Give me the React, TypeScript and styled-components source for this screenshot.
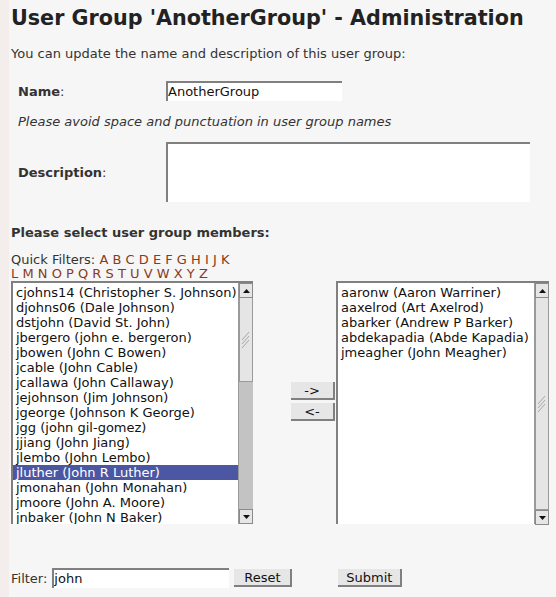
import React from "react";
import styled, { createGlobalStyle } from "styled-components";

const Global = createGlobalStyle`
  html, body { margin: 0; padding: 0; background: #f6f6f6; }
  body { font-family: "DejaVu Sans", Verdana, sans-serif; font-size: 13px; color: #333; }
`;

const Page = styled.div`
  display: flex;
  min-height: 597px;
`;

const Strip = styled.div`
  width: 9px;
  flex: none;
  background: #f3eeeb;
`;

const Main = styled.div`
  flex: 1;
  padding: 6px 0 0 2px;
`;

const Title = styled.h1`
  margin: 0;
  font-size: 20.7px;
  font-weight: bold;
  color: #222;
  line-height: 24px;
`;

const Intro = styled.p`
  margin: 16px 0 0;
  line-height: 15px;
`;

const FieldRow = styled.div<{ $top: number }>`
  display: flex;
  align-items: center;
  margin-top: ${(p) => p.$top}px;
  padding-left: 7px;
`;

const Label = styled.div`
  width: 148px;
  font-weight: bold;
  span { font-weight: normal; }
`;

const TextInput = styled.div<{ $w: number }>`
  width: ${(p) => p.$w}px;
  height: 20px;
  box-sizing: border-box;
  background: #fff;
  border-top: 2px solid #808080;
  border-left: 2px solid #808080;
  line-height: 18px;
  color: #111;
  flex: none;
`;

const TextArea = styled.div`
  width: 364px;
  height: 60px;
  box-sizing: border-box;
  background: #fff;
  border-top: 2px solid #808080;
  border-left: 2px solid #808080;
`;

const Hint = styled.p`
  margin: 13px 0 0 7px;
  font-style: italic;
  line-height: 15px;
`;

const Section = styled.h3`
  margin: 23px 0 0;
  font-size: 13px;
  font-weight: bold;
  line-height: 15px;
`;

const Picker = styled.div`
  display: flex;
  align-items: flex-end;
  margin-top: 13px;
`;

const LeftCol = styled.div`
  width: 242px;
  display: flex;
  flex-direction: column;
`;

const Quick = styled.div`
  width: 220px;
  line-height: 14px;
  margin-bottom: 0;
  a { color: #8b3a1a; text-decoration: none; }
`;

const ListBox = styled.div<{ $w: number }>`
  width: ${(p) => p.$w}px;
  height: 243px;
  box-sizing: border-box;
  background: #fff;
  border-top: 2px solid #808080;
  border-left: 2px solid #808080;
  display: flex;
  flex: none;
`;

const Options = styled.div`
  flex: 1;
  padding-top: 2px;
  overflow: hidden;
`;

const Option = styled.div<{ $sel?: boolean }>`
  height: 15px;
  line-height: 15px;
  padding-left: 3px;
  white-space: nowrap;
  color: ${(p) => (p.$sel ? "#fff" : "#111")};
  background: ${(p) => (p.$sel ? "#4b57a3" : "transparent")};
`;

const ScrollBar = styled.div`
  width: 15px;
  flex: none;
  display: flex;
  flex-direction: column;
  background: #c3c3c3;
  border-left: 1px solid #9a9a9a;
  box-sizing: border-box;
`;

const Arrow = styled.div`
  height: 15px;
  box-sizing: border-box;
  background: #e6e6e6;
  border: 1px solid #8a8a8a;
  display: flex;
  align-items: center;
  justify-content: center;
  flex: none;
`;

const Thumb = styled.div<{ $h: number }>`
  height: ${(p) => p.$h}px;
  box-sizing: border-box;
  background: #e5e5e5;
  border: 1px solid #9a9a9a;
  border-top: none;
  display: flex;
  align-items: center;
  justify-content: center;
  flex: none;
`;

const Track = styled.div`
  flex: 1;
`;

const Middle = styled.div`
  width: 83px;
  align-self: stretch;
  display: flex;
  flex-direction: column;
  justify-content: flex-end;
  align-items: flex-end;
  gap: 3px;
  padding: 0 1px 103px 0;
  box-sizing: border-box;
`;

const Btn = styled.div<{ $w: number }>`
  width: ${(p) => p.$w}px;
  height: 18px;
  box-sizing: border-box;
  background: #e6e6e6;
  border-right: 2px solid #808080;
  border-bottom: 2px solid #808080;
  line-height: 17px;
  text-align: center;
  color: #111;
  flex: none;
`;

const FilterRow = styled.div`
  display: flex;
  align-items: center;
  margin-top: 44px;
`;

const FilterLabel = styled.span`
  margin-right: 5px;
`;

const Spacer = styled.div<{ $w: number }>`
  width: ${(p) => p.$w}px;
  flex: none;
`;

const Up = () => (
  <svg width="9" height="6" viewBox="0 0 9 6"><path d="M4.5 1 L8 5 L1 5 Z" fill="#111" /></svg>
);
const Down = () => (
  <svg width="9" height="6" viewBox="0 0 9 6"><path d="M1 1 L8 1 L4.5 5 Z" fill="#111" /></svg>
);
const Grip = () => (
  <svg width="10" height="18" viewBox="0 0 10 18">
    <path d="M1 9 L8 1 M1 13 L8 5 M1 17 L8 9" stroke="#a8a8a8" strokeWidth="1" fill="none" />
  </svg>
);

const Scroller = ({ thumb }: { thumb: number }) => (
  <ScrollBar>
    <Arrow><Up /></Arrow>
    <Thumb $h={thumb}><Grip /></Thumb>
    <Track />
    <Arrow><Down /></Arrow>
  </ScrollBar>
);

const left = [
  "cjohns14 (Christopher S. Johnson)",
  "djohns06 (Dale Johnson)",
  "dstjohn (David St. John)",
  "jbergero (john e. bergeron)",
  "jbowen (John C Bowen)",
  "jcable (John Cable)",
  "jcallawa (John Callaway)",
  "jejohnson (Jim Johnson)",
  "jgeorge (Johnson K George)",
  "jgg (john gil-gomez)",
  "jjiang (John Jiang)",
  "jlembo (John Lembo)",
  "jluther (John R Luther)",
  "jmonahan (John Monahan)",
  "jmoore (John A. Moore)",
  "jnbaker (John N Baker)",
];

const right = [
  "aaronw (Aaron Warriner)",
  "aaxelrod (Art Axelrod)",
  "abarker (Andrew P Barker)",
  "abdekapadia (Abde Kapadia)",
  "jmeagher (John Meagher)",
];

const letters = "ABCDEFGHIJKLMNOPQRSTUVWXYZ".split("");

export default function App() {
  return (
    <Page>
      <Global />
      <Strip />
      <Main>
        <Title>User Group 'AnotherGroup' - Administration</Title>
        <Intro>You can update the name and description of this user group:</Intro>
        <FieldRow $top={20}>
          <Label>Name<span>:</span></Label>
          <TextInput $w={176}>AnotherGroup</TextInput>
        </FieldRow>
        <Hint>Please avoid space and punctuation in user group names</Hint>
        <FieldRow $top={13}>
          <Label>Description<span>:</span></Label>
          <TextArea />
        </FieldRow>
        <Section>Please select user group members:</Section>
        <Picker>
          <LeftCol>
            <Quick>
              Quick Filters:{" "}
              {letters.map((l) => (
                <React.Fragment key={l}>
                  <a href="#">{l}</a>{" "}
                </React.Fragment>
              ))}
            </Quick>
            <ListBox $w={242}>
              <Options>
                {left.map((o) => (
                  <Option key={o} $sel={o.startsWith("jluther")}>{o}</Option>
                ))}
              </Options>
              <Scroller thumb={84} />
            </ListBox>
          </LeftCol>
          <Middle>
            <Btn $w={44}>-&gt;</Btn>
            <Btn $w={44}>&lt;-</Btn>
          </Middle>
          <ListBox $w={213}>
            <Options>
              {right.map((o) => <Option key={o}>{o}</Option>)}
            </Options>
            <Scroller thumb={212} />
          </ListBox>
        </Picker>
        <FilterRow>
          <FilterLabel>Filter:</FilterLabel>
          <TextInput $w={177}>john</TextInput>
          <Spacer $w={5} />
          <Btn $w={58}>Reset</Btn>
          <Spacer $w={46} />
          <Btn $w={64}>Submit</Btn>
        </FilterRow>
      </Main>
    </Page>
  );
}
